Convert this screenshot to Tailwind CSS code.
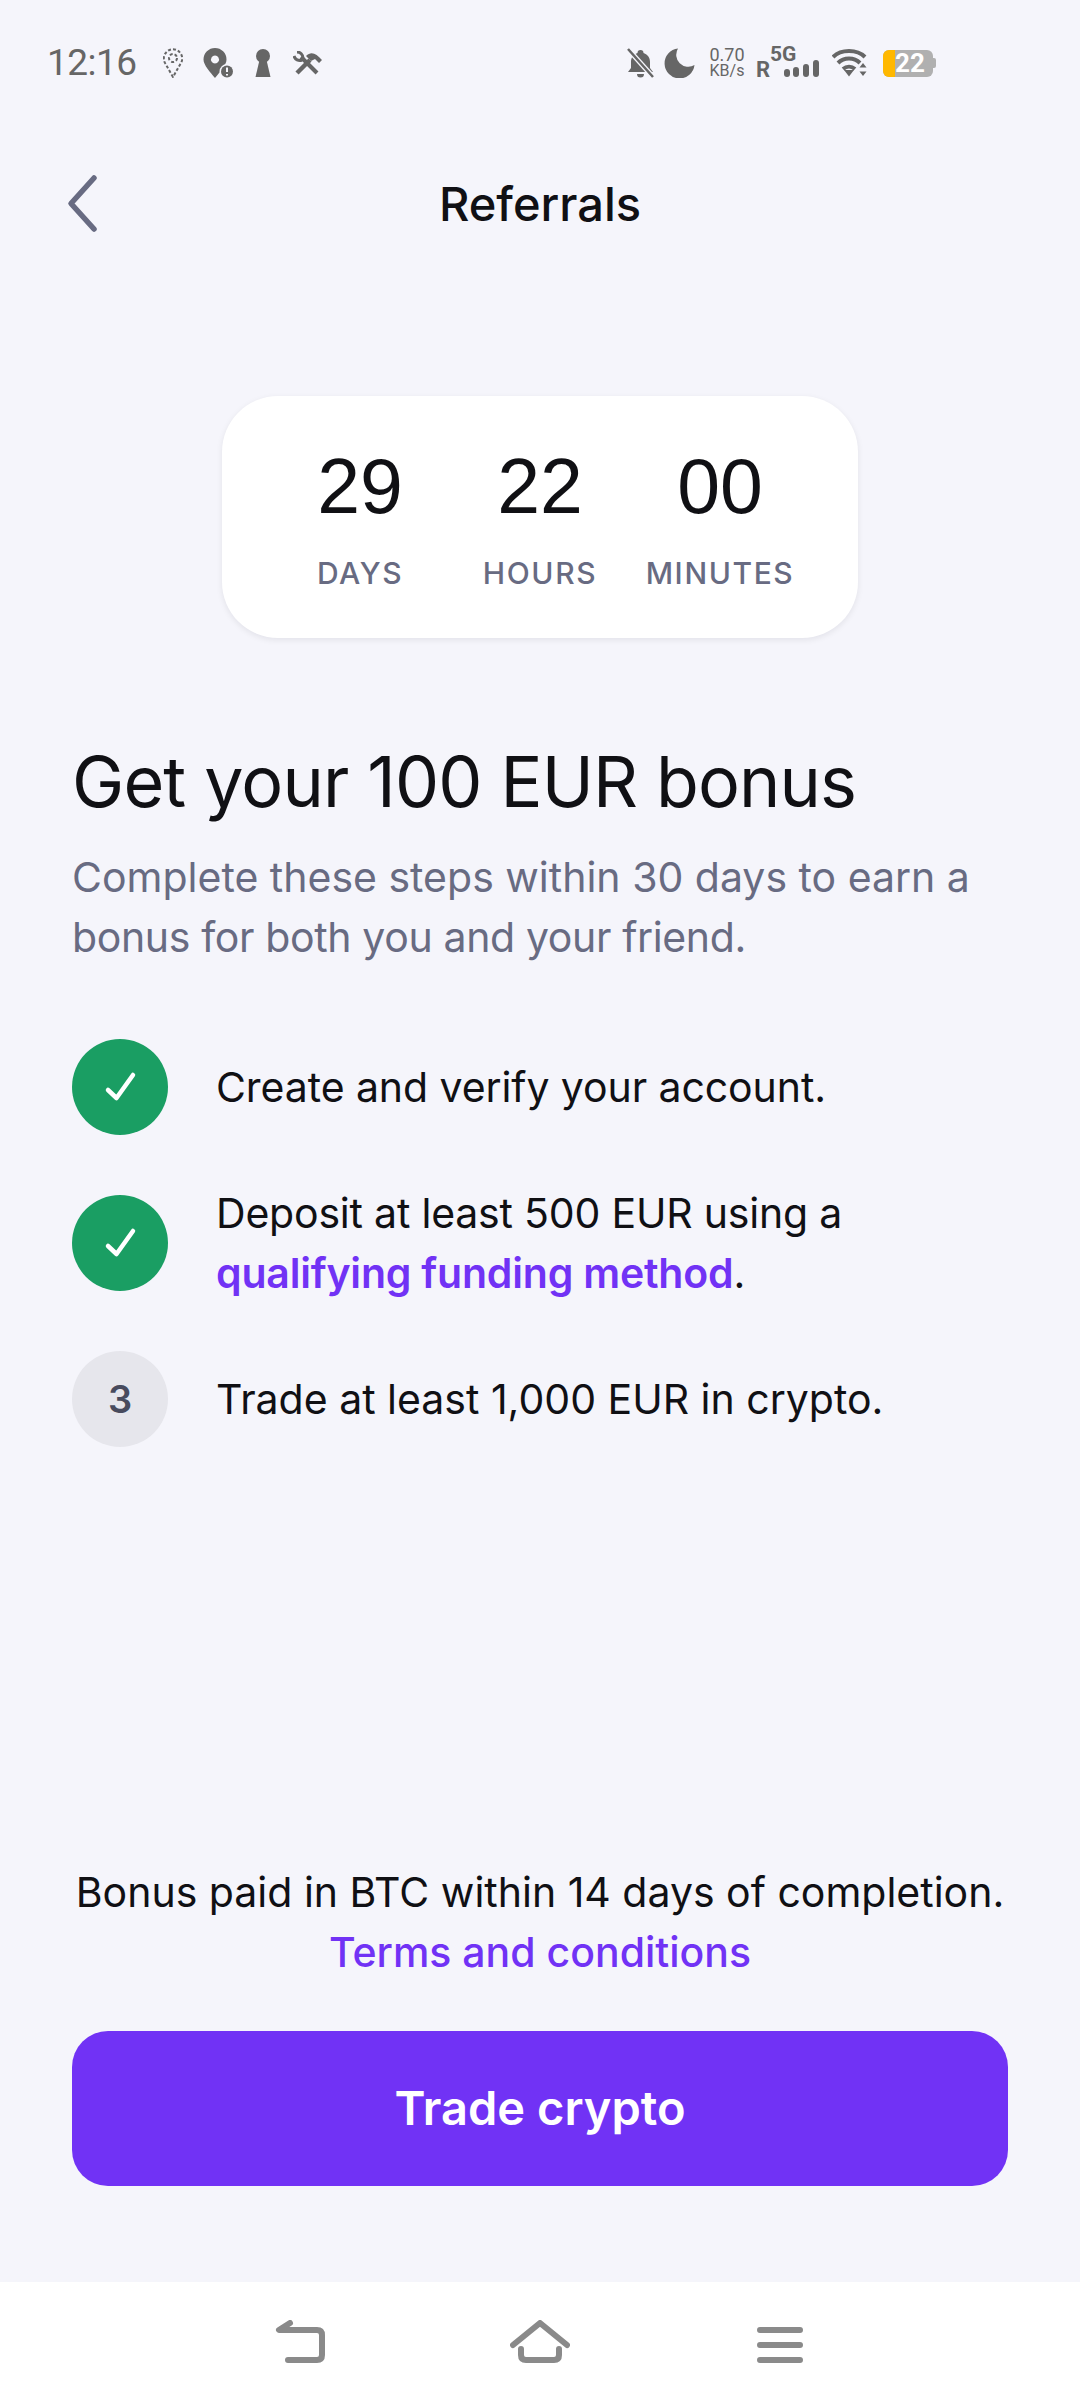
<!DOCTYPE html>
<html lang="en">
<head>
    <meta charset="UTF-8">
    <meta name="viewport" content="width=device-width, initial-scale=1.0">
    <title>Referrals</title>
    <script src="https://cdn.jsdelivr.net/npm/@tailwindcss/browser@4"></script>
</head>
<body class="bg-[#f5f5fb]">
    <div class="w-[1080px] h-[2408px] flex flex-col font-['Inter',sans-serif] text-[#101014] overflow-hidden">
        <!-- Status bar -->
        <div class="h-[126px] shrink-0 flex items-center pl-[47px] text-[#666666]">
            <span class="font-['Roboto',sans-serif] text-[37px] w-[116px] tracking-[-0.5px]">12:16</span>
            <svg class="w-[20px] h-[30px]" viewBox="0 0 20 30" fill="none" stroke="#666" stroke-width="2" stroke-dasharray="3 2"><path d="M10 29 L2.6 16 A9.2 9.2 0 1 1 17.4 16 Z"/><circle cx="10" cy="10" r="4"/></svg>
            <svg class="w-[30px] h-[30px] ml-[20px]" viewBox="0 0 30 30"><path fill="#666" fill-rule="evenodd" d="M12 0 A11.5 11.5 0 0 1 23.5 11.5 C23.5 17 17 24 12 30 C7 24 0.5 17 0.5 11.5 A11.5 11.5 0 0 1 12 0 Z M12 7.5 a4 4 0 1 0 0.01 0 Z"/><circle cx="24" cy="23.5" r="7.5" fill="#f5f5fb"/><circle cx="24" cy="23.5" r="6" fill="#666"/><path d="M24 19.5 v4.5 M24 26 v1.5" stroke="#f5f5fb" stroke-width="2"/></svg>
            <svg class="w-[16px] h-[28px] ml-[22px]" viewBox="0 0 16 28"><circle cx="8" cy="7" r="7" fill="#666"/><path d="M5 9 H11 L15.5 28 H0.5 Z" fill="#666"/></svg>
            <svg class="w-[30px] h-[24px] ml-[22px]" viewBox="0 0 30 24" fill="none" stroke="#666"><path d="M24 22 L8 6" stroke-width="4"/><path d="M1 5 a6 6 0 0 0 8 4 M4 1 a6 6 0 0 1 6 6" stroke-width="3"/><path d="M4 22 L17 9" stroke-width="4.500"/><path d="M13 5 C18 0 23 2 29 9 L26 12 L22 8 L18 10 Z" fill="#666" stroke="none"/></svg>

            <svg class="w-[27px] h-[30px] ml-[304px]" viewBox="0 0 27 30"><path fill="#666" d="M13.5 2 a3 3 0 0 1 3 3 C21 6.500 23 10 23 14 V20 L26 24 H1 L4 20 V14 C4 10 6 6.500 10.500 5 A3 3 0 0 1 13.500 2 Z M10 26 H17 A3.500 3.500 0 0 1 10 26 Z"/><path d="M1 1 L26 29" stroke="#f5f5fb" stroke-width="5"/><path d="M1 1 L26 29" stroke="#666" stroke-width="2.500"/></svg>
            <svg class="w-[31px] h-[30px] ml-[10px]" viewBox="0 0 31 30"><path fill="#666" d="M14 0.500 A15 15 0 1 0 30.500 17 A12 12 0 0 1 14 0.500 Z"/></svg>
            <div class="w-[38px] ml-[13px] flex flex-col items-center font-['Roboto',sans-serif] text-[18px] leading-[16px] text-[#666666]"><span>0.70</span><span class="text-[16px]">KB/s</span></div>
            <div class="relative w-[65px] h-[30px] ml-[10px] font-['Roboto',sans-serif] font-bold text-[#666666]">
                <span class="absolute left-0 bottom-[-3px] text-[22px] leading-[22px]">R</span>
                <span class="absolute left-[14px] top-[-4px] text-[21px] leading-[21px]">5G</span>
                <svg class="absolute left-[28px] top-[12px] w-[35px] h-[17px]" viewBox="0 0 35 17" fill="#666"><rect x="0" y="9" width="6" height="8" rx="3"/><rect x="9" y="7" width="6" height="10" rx="3"/><rect x="19" y="4" width="6" height="13" rx="3"/><rect x="29" y="0" width="6" height="17" rx="3"/></svg>
            </div>
            <svg class="w-[37px] h-[28px] ml-[11px]" viewBox="0 0 37 28" fill="none" stroke="#666" stroke-width="4"><path d="M1 8 C9 0 25 0 33 8 M6 14 C12 8 22 8 28 14 M11 20 C14.500 17 19.500 17 23 20"/><path d="M12 21 L17 27.500 L22 21 Z" fill="#666" stroke="none"/><path d="M31 14 L27.500 18.500 H34.500 Z M31 27 L27.500 22.500 H34.500 Z" fill="#666" stroke="none"/></svg>
            <div class="ml-[14px] flex items-center">
                <div class="w-[50px] h-[27px] rounded-[6px] overflow-hidden bg-[#b0b0b0] flex items-center">
                    <div class="w-[12px] h-full bg-[#ffb800]"></div>
                    <span class="font-['Roboto',sans-serif] font-bold text-[26px] leading-[26px] text-white">22</span>
                </div>
                <div class="w-[3px] h-[10px] rounded-r-[2px] bg-[#b0b0b0]"></div>
            </div>
        </div>

        <!-- Header -->
        <div class="relative h-[156px] shrink-0 flex items-center justify-center">
            <svg class="absolute left-[66px] top-[48px] w-[32px] h-[60px]" viewBox="0 0 32 60" fill="none" stroke="#686b82" stroke-width="5.500" stroke-linecap="round" stroke-linejoin="round"><path d="M28 4 L5 29.500 L28 55"/></svg>
            <h1 class="text-[47px] font-medium leading-[60px]">Referrals</h1>
        </div>

        <!-- Countdown -->
        <div class="mt-[114px] mx-auto w-[636px] h-[242px] shrink-0 bg-white rounded-[56px] shadow-[0_2px_6px_rgba(16,16,20,0.08)] grid grid-cols-[180px_180px_180px] justify-center pt-[51px]">
            <div class="flex flex-col items-center"><span class="font-['Liberation_Sans',sans-serif] text-[77px] leading-[78px]">29</span><span class="mt-[30px] text-[30px] leading-[36px] font-medium tracking-[1.6px] text-[#686b82]">DAYS</span></div>
            <div class="flex flex-col items-center"><span class="font-['Liberation_Sans',sans-serif] text-[77px] leading-[78px]">22</span><span class="mt-[30px] text-[30px] leading-[36px] font-medium tracking-[1.6px] text-[#686b82]">HOURS</span></div>
            <div class="flex flex-col items-center"><span class="font-['Liberation_Sans',sans-serif] text-[77px] leading-[78px]">00</span><span class="mt-[30px] text-[30px] leading-[36px] font-medium tracking-[1.6px] text-[#686b82]">MINUTES</span></div>
        </div>

        <!-- Copy -->
        <div class="px-[72px]">
            <h2 class="mt-[99px] text-[70px] leading-[90px] tracking-[-0.85px]">Get your 100 EUR bonus</h2>
            <p class="mt-[20px] text-[41px] leading-[60px] text-[#686b82]">Complete these steps within 30 days to earn a<br><span class="tracking-[-0.36px]">bonus for both you and your friend.</span></p>
        </div>

        <!-- Steps -->
        <div class="mt-[72px] px-[72px] flex flex-col gap-[60px] text-[41px] leading-[60px]">
            <div class="h-[96px] flex items-center gap-[48px]">
                <div class="w-[96px] h-[96px] shrink-0 rounded-full bg-[#1a9e63] flex items-center justify-center"><svg class="w-[96px] h-[96px]" viewBox="0 0 96 96" fill="none" stroke="#fff" stroke-width="4.500" stroke-linecap="round" stroke-linejoin="round"><path d="M36 51 L44.500 59 L61 36"/></svg></div>
                <span class="tracking-[-0.08px]">Create and verify your account.</span>
            </div>
            <div class="h-[96px] flex items-center gap-[48px]">
                <div class="w-[96px] h-[96px] shrink-0 rounded-full bg-[#1a9e63] flex items-center justify-center"><svg class="w-[96px] h-[96px]" viewBox="0 0 96 96" fill="none" stroke="#fff" stroke-width="4.500" stroke-linecap="round" stroke-linejoin="round"><path d="M36 51 L44.500 59 L61 36"/></svg></div>
                <span class="tracking-[-0.2px]">Deposit at least 500 EUR using a<br><a class="text-[#7132f5] font-semibold">qualifying funding method</a>.</span>
            </div>
            <div class="h-[96px] flex items-center gap-[48px]">
                <div class="w-[96px] h-[96px] shrink-0 rounded-full bg-[#e6e6ec] flex items-center justify-center text-[38px] font-semibold text-[#484b5e]">3</div>
                <span>Trade at least 1,000 EUR in crypto.</span>
            </div>
        </div>

        <!-- Footer -->
        <div class="mt-auto px-[72px] pb-[96px]">
            <p class="text-[41px] leading-[60px] text-center">Bonus paid in BTC within 14 days of completion.<br><a class="text-[#7132f5] font-medium">Terms and conditions</a></p>
            <button class="mt-[49px] w-full h-[155px] rounded-[36px] bg-[#7132f5] text-white text-[47px] font-semibold">Trade crypto</button>
        </div>

        <!-- Nav bar -->
        <div class="h-[126px] shrink-0 bg-white flex items-start pl-[275px] pt-[38px]">
            <svg class="w-[50px] h-[44px]" viewBox="0 0 50 44" fill="none" stroke="#8a8a8a" stroke-width="6" stroke-linecap="round" stroke-linejoin="round"><path d="M15 3 L4 10 H42 Q47 10 47 15 V35 Q47 40 42 40 H13"/></svg>
            <svg class="w-[60px] h-[44px] ml-[185px]" viewBox="0 0 60 44" fill="none" stroke="#8a8a8a" stroke-width="6" stroke-linecap="round" stroke-linejoin="round"><path d="M3 25 L30 3 L57 25"/><path d="M11 29 V35 Q11 40 16 40 H44 Q49 40 49 35 V29"/></svg>
            <svg class="w-[46px] h-[44px] ml-[187px]" viewBox="0 0 46 44" fill="none" stroke="#8a8a8a" stroke-width="6" stroke-linecap="round"><path d="M3 10 H43 M3 25 H43 M3 40 H43"/></svg>
        </div>
    </div>
</body>
</html>
